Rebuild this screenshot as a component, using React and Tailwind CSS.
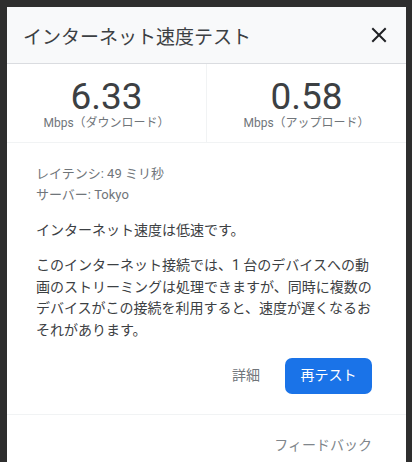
import React from 'react'

const jp = { fontFamily: 'Roboto, "Noto Sans CJK JP", sans-serif' }

function CloseIcon() {
  return (
    <svg className="w-[16px] h-[16px]" viewBox="0 0 16 16" fill="none">
      <path d="M2 2l12 12M14 2L2 14" stroke="#202124" strokeWidth="2" strokeLinecap="square"/>
    </svg>
  )
}

function Speed({ value, label }) {
  return (
    <div className="flex-1 flex flex-col items-center pt-[12px]">
      <div className="text-[37px] leading-[42px] text-[#3c4043]">{value}</div>
      <div className="text-[12px] leading-[16px] text-[#70757a] -mt-[3px]">{label}</div>
    </div>
  )
}

export default function App() {
  return (
    <div className="w-[412px] h-[462px] bg-[#2e2e2e] overflow-hidden pt-[7px] pl-[7px]" style={jp}>
      <div className="w-[399px] h-[470px] bg-white flex flex-col">
        <div className="h-[57px] bg-[#f8f9fa] border-b border-[#dadce0] flex items-center justify-between pl-[16px] pr-[19px]">
          <h1 className="text-[19px] text-[#3c4043] font-normal pt-[6px]">インターネット速度テスト</h1>
          <CloseIcon />
        </div>

        <div className="flex h-[79px] border-b border-[#f1f3f4]">
          <Speed value="6.33" label="Mbps（ダウンロード）" />
          <div className="w-px bg-[#f1f3f4]"></div>
          <Speed value="0.58" label="Mbps（アップロード）" />
        </div>

        <div className="pl-[29px] pr-[34px] pt-[20px] pb-[20px] border-b border-[#f1f3f4]">
          <div className="text-[13px] leading-[21px] text-[#70757a]">
            <p>レイテンシ: 49 ミリ秒</p>
            <p>サーバー: Tokyo</p>
          </div>
          <p className="text-[14px] leading-[22px] text-[#3c4043] mt-[14px]">インターネット速度は低速です。</p>
          <p className="text-[14px] leading-[21.7px] text-[#3c4043] mt-[14px]">
            このインターネット接続では、1 台のデバイスへの動画のストリーミングは処理できますが、同時に複数のデバイスがこの接続を利用すると、速度が遅くなるおそれがあります。
          </p>
          <div className="flex items-center justify-end gap-[25px] mt-[16px]">
            <button className="text-[14px] text-[#70757a]">詳細</button>
            <button className="w-[87px] h-[36px] rounded-[7px] bg-[#1a73e8] text-white text-[14px]">再テスト</button>
          </div>
        </div>

        <div className="flex justify-end pr-[34px] pt-[20px]">
          <span className="text-[14px] text-[#80868b]">フィードバック</span>
        </div>
      </div>
    </div>
  )
}
